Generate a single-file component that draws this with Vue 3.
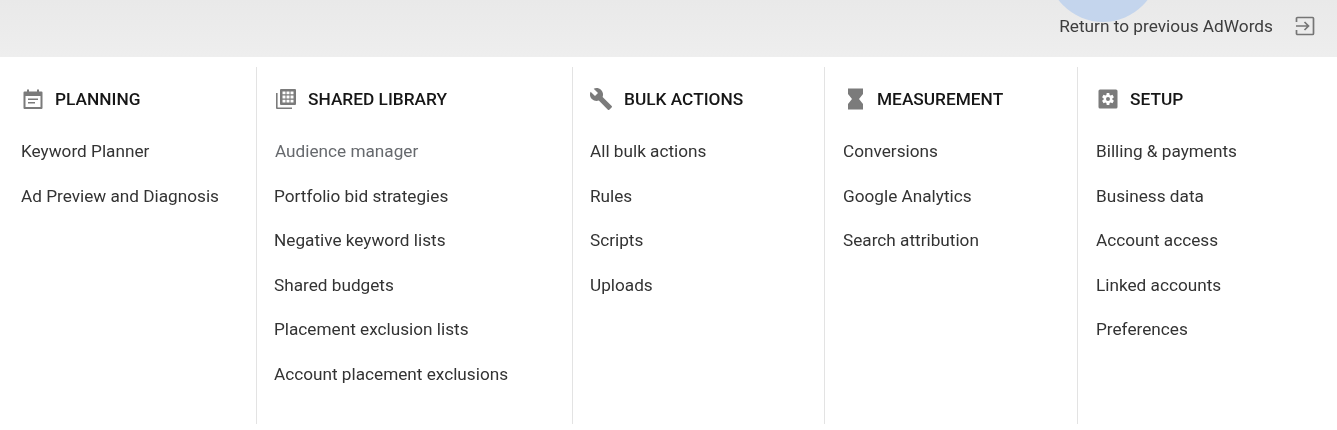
<script setup>
const columns = [
  { title: 'PLANNING', icon: 'calendar', cls: 'c1', items: ['Keyword Planner', 'Ad Preview and Diagnosis'] },
  { title: 'SHARED LIBRARY', icon: 'library', cls: 'c2', items: ['Audience manager', 'Portfolio bid strategies', 'Negative keyword lists', 'Shared budgets', 'Placement exclusion lists', 'Account placement exclusions'] },
  { title: 'BULK ACTIONS', icon: 'wrench', cls: 'c3', items: ['All bulk actions', 'Rules', 'Scripts', 'Uploads'] },
  { title: 'MEASUREMENT', icon: 'hourglass', cls: 'c4', items: ['Conversions', 'Google Analytics', 'Search attribution'] },
  { title: 'SETUP', icon: 'gear', cls: 'c5', items: ['Billing & payments', 'Business data', 'Account access', 'Linked accounts', 'Preferences'] }
]
</script>

<template>
  <div class="page">
    <header class="topbar">
      <div class="blob"></div>
      <span class="return">Return to previous AdWords</span>
      <svg class="exit" width="22" height="22" viewBox="0 0 22 22" fill="none" stroke="#757575" stroke-width="1.7">
        <path d="M2.500 7V3.500a1 1 0 0 1 1-1h15a1 1 0 0 1 1 1v15a1 1 0 0 1-1 1h-15a1 1 0 0 1-1-1V15" />
        <path d="M2 11h12M10.500 7l4 4-4 4" />
      </svg>
    </header>
    <main class="menu">
      <section v-for="col in columns" :key="col.title" class="col" :class="col.cls">
        <h3 class="head">
          <svg class="icon" width="24" height="24" viewBox="0 0 24 24" fill="#7b7b7b">
            <template v-if="col.icon === 'calendar'">
              <path fill-rule="evenodd" d="M6 2.500h2v2h8v-2h2v2h2.500a1 1 0 0 1 1 1V21a1 1 0 0 1-1 1h-17a1 1 0 0 1-1-1V5.500a1 1 0 0 1 1-1H6zM4.500 9v11h15V9z" />
              <path d="M7 11.500h10V13H7zM7 15h7v1.500H7z" />
            </template>
            <template v-else-if="col.icon === 'library'">
              <path d="M2 6h1.600v14.400H18V22H3a1 1 0 0 1-1-1z" />
              <path fill-rule="evenodd" d="M7 2h14a1 1 0 0 1 1 1v14a1 1 0 0 1-1 1H7a1 1 0 0 1-1-1V3a1 1 0 0 1 1-1zm1.500 2.500v2.800h3V4.500zm4 0v2.800h3V4.500zm4 0v2.800h3V4.500zm-8 4.100v2.800h3V8.600zm4 0v2.800h3V8.600zm4 0v2.800h3V8.600zm-8 4.100v2.800h3v-2.800zm4 0v2.800h3v-2.800zm4 0v2.800h3v-2.800z" />
            </template>
            <template v-else-if="col.icon === 'wrench'">
              <path transform="translate(-1 0)" d="M22.700 19l-9.100-9.100c.9-2.300.4-5-1.500-6.900-2-2-5-2.400-7.400-1.300L9 6 6 9 1.600 4.700C.4 7.100.9 10.100 2.900 12.100c1.900 1.900 4.600 2.400 6.900 1.500l9.100 9.100c.4.400 1 .4 1.400 0l2.300-2.300c.5-.4.500-1.100.1-1.400z" />
            </template>
            <template v-else-if="col.icon === 'hourglass'">
              <path d="M5 1.500h15v5.500L16 12l4 5v5.500H5V17l4-5-4-5z" />
            </template>
            <template v-else>
              <path fill-rule="evenodd" d="M4 2.500h16A1.500 1.500 0 0 1 21.500 4v16a1.500 1.500 0 0 1-1.500 1.500H4A1.500 1.500 0 0 1 2.500 20V4A1.500 1.500 0 0 1 4 2.500zm6.700 3.500-.3 2-1 .6-1.900-.8-1.400 2.400 1.600 1.200v1.200l-1.600 1.200 1.400 2.400 1.900-.8 1 .6.300 2h2.600l.3-2 1-.6 1.900.8 1.400-2.400-1.600-1.200v-1.200l1.600-1.200-1.400-2.400-1.900.8-1-.6-.3-2zM12 10a2 2 0 1 1 0 4 2 2 0 0 1 0-4z" />
            </template>
          </svg>
          <span>{{ col.title }}</span>
        </h3>
        <ul class="list">
          <li v-for="item in col.items" :key="item" :class="{ dim: item === 'Audience manager' }">{{ item }}</li>
        </ul>
      </section>
    </main>
  </div>
</template>

<style>
html, body { margin: 0; background: #fff; }
</style>

<style scoped>
.page {
  width: 1337px;
  height: 430px;
  overflow: hidden;
  background: #fff;
  font-family: Roboto, "Liberation Sans", sans-serif;
  filter: blur(0.35px);
}
.topbar {
  position: relative;
  height: 57px;
  box-sizing: border-box;
  padding: 0 21px 5px 0;
  display: flex;
  align-items: center;
  justify-content: flex-end;
  background: linear-gradient(#e9e9e9, #eeeeee);
  overflow: hidden;
}
.blob {
  position: absolute;
  left: 1047px;
  top: -90px;
  width: 112px;
  height: 112px;
  border-radius: 50%;
  background: #c4d5ed;
}
.return {
  position: relative;
  font-size: 17.25px;
  color: #3d3d3d;
  margin-right: 21px;
  white-space: nowrap;
}
.exit { position: relative; }
.menu {
  display: flex;
  margin-top: 10px;
  height: 357px;
}
.col { box-sizing: border-box; border-left: 1px solid #e3e3e3; padding-left: 17px; }
.c1 { width: 256px; border-left: 0; padding-left: 21px; }
.c2 { width: 316px; }
.c3 { width: 252px; }
.c4 { width: 253px; padding-left: 18px; }
.c5 { flex: 1; padding-left: 18px; }
.head {
  display: flex;
  align-items: center;
  margin: 0;
  height: 24px;
  padding-top: 20px;
  font-size: 17.3px;
  font-weight: 500;
  color: #161616;
}
.icon { margin-right: 10px; flex: none; }
.list {
  list-style: none;
  margin: 28px 0 0;
  padding: 0;
}
.list li {
  height: 44.5px;
  line-height: 24px;
  font-size: 17.2px;
  color: #333;
  white-space: nowrap;
}
.list li.dim { color: #66696d; padding-left: 1px; }
</style>
